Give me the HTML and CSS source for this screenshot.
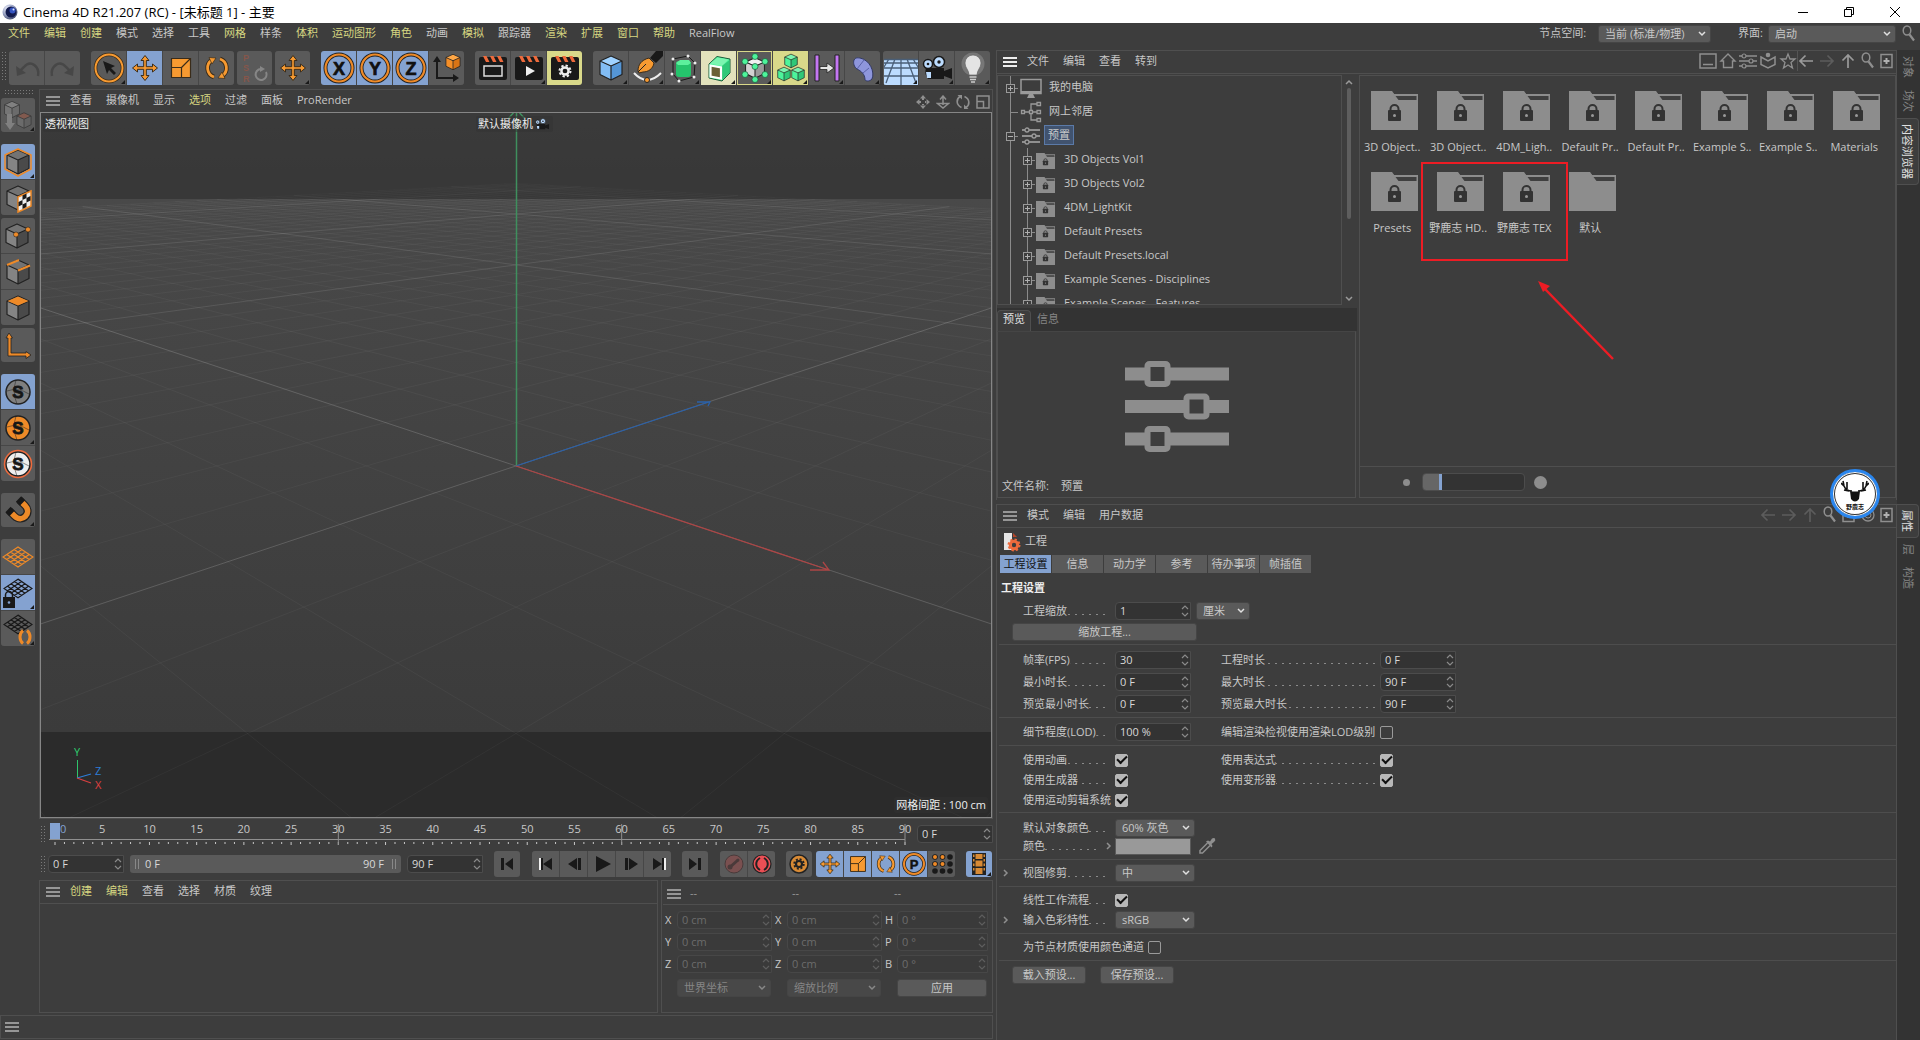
FILE: index.html
```html
<!DOCTYPE html>
<html lang="zh-CN">
<head>
<meta charset="utf-8">
<title>Cinema 4D R21.207 (RC) - [未标题 1] - 主要</title>
<link rel="stylesheet" href="styles.css">
</head>
<body>
<svg class="defs" aria-hidden="true">
  <symbol id="cube" viewBox="0 0 28 28"><path class="ct" d="M14 2 25 7 14 12 3 7Z"/><path class="cl" d="M3 7 14 12V26L3 20.500Z"/><path class="cr" d="M25 7 14 12V26L25 20.500Z"/><path fill="none" stroke="#222" stroke-width="1.200" stroke-linejoin="round" d="M14 2 25 7V20.500L14 26 3 20.500V7ZM3 7l11 5 11-5M14 12v14"/></symbol>
  <symbol id="move" viewBox="0 0 28 28"><path fill="#f79a31" stroke="#3a2c1a" stroke-width="1" stroke-linejoin="round" d="M14 1.500 18 6.500H15.300V12.700H21.500V10L26.500 14 21.500 18V15.300H15.300V21.500H18L14 26.500 10 21.500H12.700V15.300H6.500V18L1.500 14 6.500 10V12.700H12.700V6.500H10Z"/></symbol>
  <symbol id="scale" viewBox="0 0 28 28"><path fill="#f79a31" stroke="#3a2c1a" stroke-width="1.200" d="M4.500 4.500h19v19h-19z"/><path fill="none" stroke="#3a2c1a" stroke-width="1.200" d="M4.500 13.500h10v10M14.500 13.500l9-9"/></symbol>
  <symbol id="rotate" viewBox="0 0 28 28"><g fill="none" stroke="#3a2c1a" stroke-width="4.600"><path d="M11 23A9.500 9.500 0 0 1 9 6M17 5A9.500 9.500 0 0 1 19 22"/></g><g fill="none" stroke="#f79a31" stroke-width="2.800"><path d="M11 23A9.500 9.500 0 0 1 9 6M17 5A9.500 9.500 0 0 1 19 22"/></g><path fill="#f79a31" stroke="#3a2c1a" stroke-width=".7" d="M6 3.500l7 .5-4 6zM22 24.500l-7-.5 4-6z"/></symbol>
  <symbol id="clap" viewBox="0 0 34 34"><path fill="#191919" d="M3 12h28v15q0 2-2 2H5q-2 0-2-2z"/><path fill="#191919" d="M3 8q0-2 2-2h24q2 0 2 2v5H3z"/><path fill="#ee6a3c" d="M7 5h3.500l3 6H10zM14 5h3.500l3 6H17zM21 5h3.500l3 6H24z"/></symbol>
  <symbol id="folder" viewBox="0 0 47 39"><path fill="#8d8d8d" d="M0 0H21L27 9H47V39H0Z"/><path fill="#8d8d8d" d="M21 0 23 3H47V9H25Z"/><path fill="#3f3f3f" d="M24.500 5H45.500V9H27.500Z"/></symbol>
  <symbol id="lockfolder" viewBox="0 0 47 39"><use href="#folder" width="47" height="39"/><path fill="none" stroke="#333" stroke-width="2" d="M19.500 20v-2a4 4 0 0 1 8 0v2"/><rect x="17" y="19" width="13" height="11" rx="1" fill="#333"/><circle cx="23.500" cy="24.500" r="1.500" fill="#999"/></symbol>
  <symbol id="burger" viewBox="0 0 14 10"><path stroke="currentColor" stroke-width="2" d="M0 1h14M0 5h14M0 9h14"/></symbol>
  <symbol id="chev" viewBox="0 0 8 6"><path fill="none" stroke="currentColor" stroke-width="1.500" d="M1 1l3 3 3-3"/></symbol>
  <symbol id="more" viewBox="0 0 6 8"><path fill="none" stroke="#8f8f8f" stroke-width="1.500" d="M1 1l3 3-3 3"/></symbol>
  <symbol id="spin" viewBox="0 0 8 14"><path fill="none" stroke="currentColor" stroke-width="1.200" d="M1 5l3-3 3 3M1 9l3 3 3-3"/></symbol>
  <symbol id="plus" viewBox="0 0 18 24"><path stroke="#8a8a8a" d="M8.500 0V8M8.500 17V24M13 12.500h3"/><rect x="4.500" y="8.500" width="8" height="8" fill="none" stroke="#9a9a9a"/><path stroke="#b0b0b0" d="M6 12.500h5M8.500 10v5"/></symbol>
  <symbol id="minus" viewBox="0 0 18 24"><path stroke="#8a8a8a" d="M8.500 0V8M8.500 17V24M13 12.500h3"/><rect x="4.500" y="8.500" width="8" height="8" fill="none" stroke="#9a9a9a"/><path stroke="#b0b0b0" d="M6 12.500h5"/></symbol>
  <symbol id="search" viewBox="0 0 14 18"><ellipse cx="5" cy="5.500" rx="3.800" ry="4.500" fill="none" stroke="#8f8f8f" stroke-width="1.500"/><path stroke="#8f8f8f" stroke-width="2.200" d="M7.500 9.500l4.500 6"/></symbol>
  <symbol id="addbox" viewBox="0 0 14 16"><rect x="1" y="1.500" width="11" height="13" fill="none" stroke="#8f8f8f" stroke-width="1.500"/><path stroke="#b0b0b0" stroke-width="2" d="M3.500 8h6M6.500 5v6"/></symbol>
  <symbol id="arr" viewBox="0 0 16 14"><path fill="none" stroke="currentColor" stroke-width="1.700" d="M15 7H2M7.500 1.500 2 7l5.500 5.500"/></symbol>
  <symbol id="snap" viewBox="0 0 28 28"><circle class="sc" cx="14" cy="14" r="12" stroke-width="1.500"/><path fill="none" stroke="#222" stroke-opacity=".5" d="M3 13q11-4 22 3M12 2q-4 12 1 24"/></symbol>
  <symbol id="mesh" viewBox="0 0 32 22"><path fill="none" stroke="currentColor" stroke-width="1.300" d="M16 1 31 11 16 21 1 11ZM12.200 3.500 27.200 13.500M8.500 6 23.500 16M4.800 8.500 19.800 18.500M19.800 3.500 4.800 13.500M23.500 6 8.500 16M27.200 8.500 12.200 18.500"/></symbol>
  <symbol id="cam" viewBox="0 0 34 34"><path fill="#191919" d="M6 17h18v11H8q-4-5-2-11zM24 20l8-3v11l-8-3z"/><circle cx="8" cy="13" r="4.500" fill="#bcdcff" stroke="#191919" stroke-width="1.500"/><circle cx="19" cy="11" r="5.500" fill="#bcdcff" stroke="#191919" stroke-width="1.500"/><circle cx="8" cy="13" r="1.300" fill="#191919"/><circle cx="19" cy="11" r="1.700" fill="#191919"/><path fill="#bcdcff" d="M6 21h5v6H7z"/></symbol>
</svg>

<header class="titlebar">
  <svg width="16" height="16" viewBox="0 0 16 16"><defs><radialGradient id="lg" cx=".35" cy=".3" r=".8"><stop offset="0" stop-color="#f4f6ff"/><stop offset=".5" stop-color="#9aa3c4"/><stop offset="1" stop-color="#3b4466"/></radialGradient></defs><circle cx="8" cy="8" r="7.500" fill="url(#lg)"/><circle cx="9" cy="8" r="5.500" fill="#131b4e"/><circle cx="10.500" cy="6.500" r="3" fill="#3554c0"/><circle cx="11.500" cy="5.500" r="1" fill="#dce6ff"/></svg>
  <h1>Cinema 4D R21.207 (RC) - [未标题 1] - 主要</h1>
  <div class="winbtns">
    <button aria-label="最小化"><svg width="12" height="12"><path stroke="#000" d="M1 6.500h10"/></svg></button>
    <button aria-label="还原"><svg width="12" height="12"><path fill="none" stroke="#000" d="M1.500 3.500h7v7h-7zM3.500 3V1.500h7v7H9"/></svg></button>
    <button aria-label="关闭"><svg width="12" height="12"><path fill="none" stroke="#000" d="M1 1l10 10M11 1 1 11"/></svg></button>
  </div>
</header>

<div class="menubar">
  <nav class="menu">
    <button class="y">文件</button><button class="y">编辑</button><button class="y">创建</button><button>模式</button><button>选择</button><button>工具</button><button class="y">网格</button><button>样条</button><button class="y">体积</button><button class="y">运动图形</button><button class="y">角色</button><button>动画</button><button class="y">模拟</button><button>跟踪器</button><button class="y">渲染</button><button class="y">扩展</button><button class="y">窗口</button><button class="y">帮助</button><button>RealFlow</button>
  </nav>
  <label for="nodes">节点空间:</label>
  <span class="sel w-nodes"><select id="nodes"><option>当前 (标准/物理)</option></select><svg width="8" height="6"><use href="#chev"/></svg></span>
  <label for="layout" class="lay">界面:</label>
  <span class="sel w-layout"><select id="layout"><option>启动</option></select><svg width="8" height="6"><use href="#chev"/></svg></span>
  <button class="find" aria-label="搜索"><svg width="14" height="18"><use href="#search"/></svg></button>
</div>

<main class="app">
<section class="left">
  <div class="toolbar">
    <i class="grip v"></i>
    <div class="grp"><button disabled><svg viewBox="0 0 34 34"><path fill="none" stroke="#474747" stroke-width="2.500" d="M28 25c2-9-7-17-14-9l-4 4"/><path fill="#474747" d="M6 15l1 10 9-3z"/></svg></button><button disabled><svg viewBox="0 0 34 34"><path fill="none" stroke="#474747" stroke-width="2.500" d="M6 25c-2-9 7-17 14-9l4 4"/><path fill="#474747" d="M28 15l-1 10-9-3z"/></svg></button></div>
    <div class="grp g2"><button class="tri"><svg viewBox="0 0 34 34"><circle cx="17" cy="17" r="13.500" fill="none" stroke="#3a2c1a" stroke-width="3.500"/><circle cx="17" cy="17" r="13.500" fill="none" stroke="#f79a31" stroke-width="2"/><path fill="#191919" d="M11 10l12 5-4 2 5 5-2 2-5-5-2 4z"/></svg></button><button class="on"><svg viewBox="0 0 34 34"><use href="#move" x="3" y="3" width="28" height="28"/></svg></button><button><svg viewBox="0 0 34 34"><use href="#scale" x="3" y="3" width="28" height="28"/></svg></button><button><svg viewBox="0 0 34 34"><use href="#rotate" x="3" y="3" width="28" height="28"/></svg></button></div>
    <div class="grp g3"><button disabled><svg viewBox="0 0 34 34"><g class="psr"><text x="5" y="10">P</text><text x="5" y="20">S</text><text x="5" y="31">R</text></g><path fill="none" stroke="#868686" stroke-width="2" d="M28 21a5.500 5.500 0 1 1-5-3"/><path fill="#868686" d="M22 15l5 3-5 3z"/></svg></button></div>
    <div class="grp g4"><button class="tri"><svg viewBox="0 0 34 34"><use href="#move" x="3" y="3" width="28" height="28"/></svg></button></div>
    <div class="grp g2"><button class="on"><svg viewBox="0 0 34 34"><g fill="none"><circle cx="17" cy="17" r="13.500" stroke="#222" stroke-width="4"/><circle cx="17" cy="17" r="13.500" stroke="#ee8a28" stroke-width="2.200"/></g><text x="17" y="23.500" text-anchor="middle" class="big">X</text></svg></button><button class="on"><svg viewBox="0 0 34 34"><g fill="none"><circle cx="17" cy="17" r="13.500" stroke="#222" stroke-width="4"/><circle cx="17" cy="17" r="13.500" stroke="#ee8a28" stroke-width="2.200"/></g><text x="17" y="23.500" text-anchor="middle" class="big">Y</text></svg></button><button class="on"><svg viewBox="0 0 34 34"><g fill="none"><circle cx="17" cy="17" r="13.500" stroke="#222" stroke-width="4"/><circle cx="17" cy="17" r="13.500" stroke="#ee8a28" stroke-width="2.200"/></g><text x="17" y="23.500" text-anchor="middle" class="big">Z</text></svg></button><button><svg viewBox="0 0 34 34"><path fill="none" stroke="#191919" stroke-width="2" d="M7 10v17h17"/><path fill="#191919" d="M7 5l4 6H3zM29 27l-6 4v-8z"/><g class="orange"><use href="#cube" x="14" y="2" width="18" height="18"/></g></svg></button></div>
    <div class="grp g2"><button><svg viewBox="0 0 34 34"><use href="#clap"/><path fill="none" stroke="#ddd" stroke-width="1.500" d="M8 15h18v10H8z"/></svg></button><button class="tri"><svg viewBox="0 0 34 34"><use href="#clap"/><path fill="#eee" d="M14 15l9 5-9 5z"/></svg></button><button class="yel"><svg viewBox="0 0 34 34"><use href="#clap"/><circle cx="17" cy="20" r="3.600" fill="none" stroke="#eee" stroke-width="2.500"/><circle cx="17" cy="20" r="5.500" fill="none" stroke="#eee" stroke-width="2" stroke-dasharray="2.300 2"/></svg></button></div>
    <div class="grp g2"><button class="tri blue"><svg viewBox="0 0 34 34"><use href="#cube" x="3" y="3" width="28" height="28"/></svg></button><button class="tri"><svg viewBox="0 0 34 34"><path fill="#191919" d="M20 7l6-7h7v5l-7 7z"/><path fill="#f79a31" stroke="#3a2c1a" d="M8 20c0-6 3-11 11-13l5 5c-1 6-6 9-11 9l-4 1z"/><path stroke="#222" d="M8 21l8-8"/><path fill="none" stroke="#eee" stroke-width="2" d="M4 22q13 14 27 0"/><circle cx="17" cy="29" r="2.500" fill="#f79a31" stroke="#222"/></svg></button><button class="tri grn"><svg viewBox="0 0 34 34"><path fill="none" stroke="#191919" d="M7 8l15-3 7 7-1 14-15 4-6-7z"/><rect x="10" y="10" width="15" height="16" rx="3" fill="#25c46c"/><path fill="#5cf09c" d="M10 12l4-3h9l2 3-3 2H12z"/><g fill="#eee"><circle cx="7" cy="8" r="1.500"/><circle cx="22" cy="5" r="1.500"/><circle cx="29" cy="12" r="1.500"/><circle cx="28" cy="26" r="1.500"/><circle cx="13" cy="30" r="1.500"/><circle cx="6" cy="23" r="1.500"/></g></svg></button><button class="tri pale grn"><svg viewBox="0 0 34 34"><path fill="#4df49b" stroke="#1c5a3a" d="M7 13 15 5.500 28 8V22L20 30 7 27Z"/><path fill="#7bf5b0" d="M8 12.500 15.500 6.500 26.500 8.500 20 15Z"/><path fill="#2fc878" d="M20 15 27.500 9V22L20 29Z"/><path fill="#6b6038" stroke="#fff" stroke-width="2.200" d="M8.500 14.500 19 16.500V27.500L8.500 25.500Z"/></svg></button><button class="tri ring"><svg viewBox="0 0 34 34"><g class="wht"><use href="#cube" x="5" y="5" width="24" height="24"/></g><g fill="#4df49b" stroke="#1c5a3a" stroke-width=".7"><circle cx="17" cy="5.500" r="3"/><circle cx="7" cy="10.500" r="3"/><circle cx="27" cy="10.500" r="3"/><circle cx="17" cy="15.500" r="3"/><circle cx="7" cy="23.500" r="3"/><circle cx="27" cy="23.500" r="3"/><circle cx="17" cy="28.500" r="3"/></g></svg></button><button class="tri yel grn"><svg viewBox="0 0 34 34"><use href="#cube" x="9" y="2" width="16" height="16"/><use href="#cube" x="2" y="15" width="16" height="16"/><use href="#cube" x="16" y="15" width="16" height="16"/></svg></button><button class="tri"><svg viewBox="0 0 34 34"><path fill="#c477f3" stroke="#222" d="M5 4h4v26H5zM25 4h4v26h-4z"/><path fill="#e6e6e6" stroke="#222" stroke-width=".8" d="M10 15.500h7V12l7 5-7 5v-3.500h-7z"/></svg></button><button class="tri"><svg viewBox="0 0 34 34"><path fill="#8e96dc" stroke="#333a66" d="M8 9c2-3 4-2 6-2 10 2 15 14 12 21-3 3-6 2-7 1 0-6-4-9-8-11-3-2-4-6-3-9z"/><path stroke="#5a62a8" d="M11 18l7-9M17 22l6-5"/></svg></button></div>
    <div class="grp g4"><button class="tri"><svg viewBox="0 0 34 34"><path fill="#bcdcff" d="M0 8h34v26H0z"/><path fill="none" stroke="#4a5f78" stroke-width="1.300" d="M0 8.500h34M0 12h34M0 17h34M0 25h34M17 8v26M11 8 2 32M23 8l9 24M5 8l-5 8M29 8l5 8"/></svg></button><button class="tri"><svg viewBox="0 0 34 34"><use href="#cam"/></svg></button><button class="tri"><svg viewBox="0 0 34 34"><circle cx="17" cy="13" r="11.500" fill="#fff" opacity=".18"/><path fill="#e4e4e4" stroke="#666" stroke-width=".7" d="M9 12a8 8 0 0 1 16 0c0 5-4 7-4 12h-8c0-5-4-7-4-12z"/><path stroke="#ccc" stroke-width="1.600" d="M13.500 26h7M14 28.500h6M15 31h4"/></svg></button></div>
  </div>

  <div class="work">
    <aside class="tools">
      <i class="grip h"></i>
      <div class="vgrp"><button disabled class="tri gry"><svg viewBox="0 0 34 34" opacity=".6"><use href="#cube" x="1" y="2" width="20" height="19"/><g class="red"><use href="#cube" x="14" y="13" width="18" height="19"/></g><path fill="#999" d="M6 16h5v9h3l-5 7-5-7h2z"/></svg></button></div>
      <div class="vgrp a"><button class="on tri dk"><svg viewBox="0 0 34 34"><use href="#cube" x="3" y="3" width="28" height="28"/><path fill="none" stroke="#ee8a28" stroke-width="1.500" stroke-linejoin="round" d="M17 4 30 10V24L17 31 4 24V10Z"/></svg></button><button class="dk"><svg viewBox="0 0 34 34"><use href="#cube" x="3" y="3" width="28" height="28"/><path fill="#eee" stroke="#ee8a28" stroke-width="1.500" d="M17 16l13-6v15l-13 6z"/><path fill="#191919" d="M17.500 21l4-2v-4.500l4-2v4.500l4-2v4.500l-4 2V17l-4 2v4.500l-4 2zM21.500 23.500l4-2V26l-4 2z"/></svg></button></div>
      <div class="vgrp"><button class="dk"><svg viewBox="0 0 34 34"><use href="#cube" x="2" y="3" width="28" height="28"/><circle cx="15" cy="15.500" r="2.500" fill="#ee8a28" stroke="#222" stroke-width=".6"/><circle cx="27" cy="10.500" r="2.500" fill="#ee8a28" stroke="#222" stroke-width=".6"/></svg></button><button class="dk"><svg viewBox="0 0 34 34"><use href="#cube" x="3" y="3" width="28" height="28"/><path stroke="#ee8a28" stroke-width="2" d="M6 10l12-5M17 15.500l12-5"/></svg></button><button class="dk"><svg viewBox="0 0 34 34"><use href="#cube" x="3" y="3" width="28" height="28"/><path fill="#ee8a28" d="M17 5.500 27.500 10 17 14.500 6.500 10z"/></svg></button></div>
      <div class="vgrp"><button><svg viewBox="0 0 34 34"><path fill="#ee8a28" stroke="#222" stroke-width=".8" d="M8 5l3.500 5H10v15h15v-1.500l5 3.500-5 3.500V28H7V10H5z"/></svg></button></div>
      <div class="vgrp a"><button class="on sg"><svg viewBox="0 0 34 34"><use href="#snap" x="3" y="3" width="28" height="28"/><text x="17" y="23" text-anchor="middle" class="blk">S</text></svg></button><button class="tri so"><svg viewBox="0 0 34 34"><use href="#snap" x="3" y="3" width="28" height="28"/><text x="17" y="23" text-anchor="middle" class="blk">S</text></svg></button><button class="sw"><svg viewBox="0 0 34 34"><use href="#snap" x="3" y="3" width="28" height="28"/><circle cx="17" cy="17" r="13.500" fill="none" stroke="#ee6a3c" stroke-width="1.500"/><text x="17" y="23" text-anchor="middle" class="blk">S</text></svg></button></div>
      <div class="vgrp a"><button class="tri"><svg viewBox="0 0 34 34"><g fill="none" stroke="#222" stroke-width="8"><path d="M8 17.500 13.500 23C21 30.500 31.500 20 24 12.500L18.500 7"/></g><path fill="none" stroke="#ee8a28" stroke-width="5.600" d="M10 19.500 13.500 23C21 30.500 31.500 20 24 12.500L20.500 9"/><path stroke="#191919" stroke-width="7.500" d="M7 16.500l4 4M17.500 6l4 4"/></svg></button></div>
      <div class="vgrp a"><button><svg viewBox="0 0 34 34" class="ora"><use href="#mesh" x="1" y="6" width="32" height="22"/></svg></button><button class="on tri"><svg viewBox="0 0 34 34" class="blkc"><use href="#mesh" x="2" y="2" width="30" height="21"/><rect x="2" y="21" width="12" height="11" fill="#191919"/><path fill="none" stroke="#191919" stroke-width="1.500" d="M4.500 21v-2a3.500 3.500 0 0 1 7 0v2"/><circle cx="8" cy="26.500" r="1.300" fill="#84a2d0"/></svg></button><button class="tri"><svg viewBox="0 0 34 34" class="blkc"><use href="#mesh" x="2" y="2" width="30" height="21"/><path fill="none" stroke="#ee8a28" stroke-width="3" d="M22 18.500c-4 3-4 10 0 13M26 18.500c4 3 4 10 0 13"/></svg></button></div>
    </aside>

    <div class="center">
      <div class="panel viewpanel">
        <nav class="menu phead"><svg class="bg" width="14" height="10"><use href="#burger"/></svg><button>查看</button><button>摄像机</button><button>显示</button><button class="y">选项</button><button>过滤</button><button>面板</button><button>ProRender</button>
          <span class="vicons"><svg width="14" height="14" viewBox="0 0 14 14"><path fill="#8f8f8f" d="M7 0l3 3.500H4zM7 14l3-3.500H4zM0 7l3.500-3v6zM14 7l-3.500-3v6zM6 3h2v2H6zM6 9h2v2H6zM3 6h2v2H3zM9 6h2v2H9z"/></svg><svg width="14" height="14" viewBox="0 0 14 14"><path fill="none" stroke="#8f8f8f" stroke-width="1.500" d="M7 10V2M4 4.500 7 1l3 3.500M1.500 8.500h11L7 13z"/></svg><svg width="14" height="14" viewBox="0 0 14 14"><path fill="none" stroke="#8f8f8f" stroke-width="1.600" d="M5.500 12.500C0 10 0 4 4 1.500M8.500 1.500C14 4 14 10 10 12.500"/><path fill="#8f8f8f" d="M1.500 0H6v4.500zM12.500 14H8V9.500z"/></svg><svg width="14" height="14" viewBox="0 0 14 14"><path fill="none" stroke="#8f8f8f" stroke-width="1.500" d="M1 1h12v12H1zM1 6.500h6.500V13"/></svg></span>
        </nav>
        <div class="viewport">
          <svg class="scene" viewBox="0 0 950 704" preserveAspectRatio="xMidYMid slice">
            <defs><linearGradient id="sky" x2="0" y2="1"><stop offset="0" stop-color="#3d3d3d"/><stop offset="1" stop-color="#373737"/></linearGradient><linearGradient id="floor" x2="0" y2="1"><stop offset="0" stop-color="#494949"/><stop offset="1" stop-color="#3b3b3b"/></linearGradient></defs>
            <rect width="950" height="87" fill="url(#sky)"/><rect y="86" width="950" height="533" fill="url(#floor)"/><rect y="619" width="950" height="85" fill="#2b2b2b"/>
            <path id="minor" fill="none" stroke="#fff" stroke-opacity=".04"/><path id="major" fill="none" stroke="#fff" stroke-opacity=".1"/><path id="axes" fill="none" stroke="#fff" stroke-opacity=".07"/>
            <rect width="950" height="86" fill="#393939" opacity=".6"/>
            <path fill="none" stroke="#3f8f5e" stroke-width="1.500" d="M475.500 353V0M467 6l7-8M484 6l-7-8"/>
            <path fill="none" stroke="#2a61aa" stroke-width="1.300" d="M475 353 668 289M656 289h13l-2 4"/>
            <path fill="none" stroke="#ad4545" stroke-width="1.300" d="M475 353 788 457M782 449l6 8h-19"/>
          </svg>
          <span class="tag tl">透视视图</span>
          <span class="tag tc">默认摄像机<svg width="18" height="16"><use href="#cam"/></svg></span>
          <svg class="gizmo" width="44" height="50" viewBox="0 0 44 50"><path stroke="#2fc46b" d="M12.500 15v18"/><path stroke="#2d7dd6" stroke-width="1.300" d="M12 33l14-4"/><path stroke="#d84040" stroke-width="1.300" d="M12 33l14 5"/><text x="9" y="11" fill="#2fd070">Y</text><text x="30" y="30" fill="#2d7dd6">Z</text><text x="30" y="44" fill="#e04040">X</text></svg>
          <span class="tag br">网格间距 : 100 cm</span>
        </div>
      </div>

      <div class="timeline">
        <i class="grip v"></i>
        <div class="ruler">
          <i class="head"></i>
          <ol id="labels"></ol>
          <svg id="ticks" width="100%" height="24"></svg>
        </div>
        <span class="num"><input aria-label="当前帧" value="0 F"><svg width="8" height="14"><use href="#spin"/></svg></span>
      </div>

      <div class="transport">
        <i class="grip v"></i>
        <span class="num"><input aria-label="起始帧" value="0 F"><svg width="8" height="14"><use href="#spin"/></svg></span>
        <div class="range"><i></i><span>0 F</span><span class="end">90 F</span><i></i></div>
        <span class="num"><input aria-label="结束帧" value="90 F"><svg width="8" height="14"><use href="#spin"/></svg></span>
        <div class="pg one p1"><button><svg viewBox="0 0 26 26"><path fill="#191919" d="M7 7h3v12H7zM19 7v12l-8-6z"/></svg></button></div>
        <div class="pg p1"><button><svg viewBox="0 0 26 26"><path fill="#eee" d="M6 7h2v12H6z"/><path fill="#191919" d="M8 7h2v12H8zM19 7v12l-9-6z"/></svg></button><button><svg viewBox="0 0 26 26"><path fill="#191919" d="M7 13l9-6v12zM17 7h3v12h-3z"/></svg></button><button><svg viewBox="0 0 26 26"><path fill="#191919" d="M7 5l15 8-15 8z"/></svg></button><button><svg viewBox="0 0 26 26"><path fill="#191919" d="M8 7h3v12H8zM12 7l9 6-9 6z"/></svg></button><button><svg viewBox="0 0 26 26"><path fill="#191919" d="M8 7l9 6-9 6zM17 7h2v12h-2z"/><path fill="#eee" d="M19 7h2v12h-2z"/></svg></button></div>
        <div class="pg one p1"><button><svg viewBox="0 0 26 26"><path fill="#191919" d="M7 7l8 6-8 6zM16 7h3v12h-3z"/></svg></button></div>
        <div class="pg p1"><button disabled><svg viewBox="0 0 26 26"><circle cx="13" cy="13" r="9" fill="#7a5050" stroke="#4a3a3a"/><path stroke="#4a3a3a" stroke-width="3" d="M8 17l9-8"/><circle cx="9" cy="16" r="2.500" fill="#4a3a3a"/><circle cx="17" cy="9" r="1.500" fill="#4a3a3a"/></svg></button><button><svg viewBox="0 0 26 26"><circle cx="13" cy="13" r="9" fill="#ea4f55" stroke="#222" stroke-width="1.200"/><path fill="none" stroke="#222" stroke-width="2" d="M11 7c-5 3-5 9 0 12M15 7c5 3 5 9 0 12"/></svg></button></div>
        <div class="pg one p1"><button><svg viewBox="0 0 26 26"><circle cx="13" cy="13" r="9" fill="#d88a35" stroke="#222" stroke-width="1.500"/><circle cx="13" cy="13" r="3" fill="none" stroke="#222" stroke-width="2.200"/><circle cx="13" cy="13" r="4.800" fill="none" stroke="#222" stroke-width="1.800" stroke-dasharray="2 1.770"/></svg></button></div>
        <div class="pg p4"><button class="on"><svg viewBox="0 0 26 26"><use href="#move" x="2" y="2" width="22" height="22"/></svg></button><button class="on"><svg viewBox="0 0 26 26"><use href="#scale" x="2" y="2" width="22" height="22"/></svg></button><button class="on"><svg viewBox="0 0 26 26"><use href="#rotate" x="2" y="2" width="22" height="22"/></svg></button><button class="on"><svg viewBox="0 0 26 26"><circle cx="13" cy="13" r="10" fill="none" stroke="#222" stroke-width="3.500"/><circle cx="13" cy="13" r="10" fill="none" stroke="#ee8a28" stroke-width="2"/><text x="13" y="18" text-anchor="middle" class="med">P</text></svg></button><button><svg viewBox="0 0 26 26"><g fill="#191919"><circle cx="6" cy="6" r="2.800"/><circle cx="13.500" cy="6" r="2.800"/><circle cx="21" cy="6" r="2.800"/><circle cx="6" cy="13" r="2.800"/><circle cx="13.500" cy="13" r="2.800"/><circle cx="21" cy="13" r="2.800"/><circle cx="6" cy="20" r="2.800"/><circle cx="13.500" cy="20" r="2.800"/><circle cx="21" cy="20" r="2.800"/></g><g fill="#ee8a28"><circle cx="6" cy="6" r="2"/><circle cx="13.500" cy="6" r="2"/><circle cx="6" cy="13" r="2"/><circle cx="13.500" cy="13" r="2"/></g></svg></button></div>
        <div class="pg one p1"><button class="on tri"><svg viewBox="0 0 26 26"><path fill="#222" d="M6 2h14v22H6z"/><path fill="#d88a35" d="M9.500 3h7v5h-7zM9.500 9.500h7v6h-7zM9.500 17h7v6h-7zM7 3.500h1.500V6H7zM7 8h1.500v2.500H7zM7 12.500h1.500V15H7zM7 17h1.500v2.500H7zM17.500 3.500H19V6h-1.500zM17.500 8H19v2.500h-1.500zM17.500 12.500H19V15h-1.500zM17.500 17H19v2.500h-1.500z"/></svg></button></div>
      </div>

      <div class="bottom">
        <div class="panel mats"><nav class="menu phead"><svg class="bg" width="14" height="10"><use href="#burger"/></svg><button class="y">创建</button><button class="y">编辑</button><button>查看</button><button>选择</button><button>材质</button><button>纹理</button></nav></div>
        <div class="panel coords">
          <div class="chead"><svg class="bg" width="14" height="10"><use href="#burger"/></svg><span>--</span><span>--</span><span>--</span></div>
          <div class="cgrid">
            <label for="px">X</label><span class="num"><input id="px" disabled value="0 cm"><svg width="8" height="14"><use href="#spin"/></svg></span><label for="sx">X</label><span class="num"><input id="sx" disabled value="0 cm"><svg width="8" height="14"><use href="#spin"/></svg></span><label for="rh">H</label><span class="num"><input id="rh" disabled value="0 °"><svg width="8" height="14"><use href="#spin"/></svg></span>
            <label for="py">Y</label><span class="num"><input id="py" disabled value="0 cm"><svg width="8" height="14"><use href="#spin"/></svg></span><label for="sy">Y</label><span class="num"><input id="sy" disabled value="0 cm"><svg width="8" height="14"><use href="#spin"/></svg></span><label for="rp">P</label><span class="num"><input id="rp" disabled value="0 °"><svg width="8" height="14"><use href="#spin"/></svg></span>
            <label for="pz">Z</label><span class="num"><input id="pz" disabled value="0 cm"><svg width="8" height="14"><use href="#spin"/></svg></span><label for="sz">Z</label><span class="num"><input id="sz" disabled value="0 cm"><svg width="8" height="14"><use href="#spin"/></svg></span><label for="rb">B</label><span class="num"><input id="rb" disabled value="0 °"><svg width="8" height="14"><use href="#spin"/></svg></span>
            <span></span><span class="sel off"><select disabled aria-label="坐标系"><option>世界坐标</option></select><svg width="8" height="6"><use href="#chev"/></svg></span><span></span><span class="sel off"><select disabled aria-label="尺寸模式"><option>缩放比例</option></select><svg width="8" height="6"><use href="#chev"/></svg></span><span></span><button class="btn">应用</button>
          </div>
        </div>
      </div>
    </div>
  </div>
  <footer class="panel status"><svg class="bg" width="14" height="10"><use href="#burger"/></svg></footer>
</section>

<section class="right">
  <div class="browser panel">
    <nav class="menu phead"><svg class="bg lit" width="14" height="10"><use href="#burger"/></svg><button>文件</button><button>编辑</button><button>查看</button><button>转到</button>
      <span class="bicons">
        <svg width="18" height="18" viewBox="0 0 18 18"><path fill="none" stroke="#8f8f8f" stroke-width="1.500" d="M1 2h16v14H1zM4 12.500h10"/></svg>
        <svg width="18" height="18" viewBox="0 0 18 18"><path fill="none" stroke="#8f8f8f" stroke-width="1.400" d="M9 2l7 7h-2.500v6.500h-9V9H2z"/></svg>
        <svg width="18" height="18" viewBox="0 0 18 18"><path stroke="#8f8f8f" stroke-width="1.500" d="M0 4h18M0 9h18M0 14h18"/><g fill="#3d3d3d" stroke="#8f8f8f" stroke-width="1.200"><circle cx="5" cy="4" r="2"/><circle cx="12" cy="9" r="2"/><circle cx="5" cy="14" r="2"/></g></svg>
        <svg width="18" height="18" viewBox="0 0 18 18"><circle cx="9" cy="3" r="2.300" fill="#8f8f8f"/><path fill="none" stroke="#8f8f8f" stroke-width="1.500" d="M2 5l7 4 7-4v7.500L9 16l-7-3.500z"/></svg>
        <svg width="18" height="18" viewBox="0 0 18 18"><path fill="none" stroke="#8f8f8f" stroke-width="1.300" d="M9 2l2 5h5l-4 3.500 1.500 5.500L9 13l-4.500 3L6 10.500 2 7h5z"/></svg>
        <i class="vr"></i>
        <svg width="16" height="14"><use href="#arr"/></svg><svg class="dim flip" width="16" height="14"><use href="#arr"/></svg><svg class="up" width="16" height="14"><use href="#arr"/></svg>
        <svg width="14" height="18"><use href="#search"/></svg><svg width="14" height="16"><use href="#addbox"/></svg>
      </span>
    </nav>
    <div class="bbody">
      <div class="bleft">
        <div class="treewrap">
          <ul class="tree">
            <li><svg width="18" height="24"><use href="#plus"/></svg><svg class="ic" width="22" height="20" viewBox="0 0 22 20"><path fill="none" stroke="#9a9a9a" stroke-width="1.500" d="M1 1.500h20v14H1z"/><path fill="#9a9a9a" d="M1 13h20v3H1zM9 16h4l2 4H7z"/></svg><span>我的电脑</span></li>
            <li><svg width="18" height="24" viewBox="0 0 18 24"><path stroke="#8a8a8a" d="M8.500 0v24M9 12.500h7"/></svg><svg class="ic" width="22" height="22" viewBox="0 0 22 22"><path fill="none" stroke="#9a9a9a" stroke-width="1.300" d="M5 11h4M13 11h4M11 9V3h6M11 13v6h6M1.500 9.500h3v3h-3zM9.500 9.500h3v3h-3zM17 9.500h3.500v3H17zM17 1.500h3.500v3H17zM17 17.500h3.500v3H17z"/></svg><span>网上邻居</span></li>
            <li><svg width="18" height="24"><use href="#minus"/></svg><svg class="ic" width="22" height="20" viewBox="0 0 22 20"><path stroke="#8f8f8f" stroke-width="1.800" d="M2 4h18M2 10h18M2 16h18"/><g fill="#3d3d3d" stroke="#9a9a9a" stroke-width="1.300"><circle cx="7" cy="4" r="2"/><circle cx="14" cy="10" r="2"/><circle cx="7" cy="16" r="2"/></g></svg><span class="cur">预置</span></li>
            <li class="s"><svg width="18" height="24"><use href="#plus"/></svg><svg class="ic" width="19" height="16"><use href="#lockfolder"/></svg><span>3D Objects Vol1</span></li>
            <li class="s"><svg width="18" height="24"><use href="#plus"/></svg><svg class="ic" width="19" height="16"><use href="#lockfolder"/></svg><span>3D Objects Vol2</span></li>
            <li class="s"><svg width="18" height="24"><use href="#plus"/></svg><svg class="ic" width="19" height="16"><use href="#lockfolder"/></svg><span>4DM_LightKit</span></li>
            <li class="s"><svg width="18" height="24"><use href="#plus"/></svg><svg class="ic" width="19" height="16"><use href="#lockfolder"/></svg><span>Default Presets</span></li>
            <li class="s"><svg width="18" height="24"><use href="#plus"/></svg><svg class="ic" width="19" height="16"><use href="#lockfolder"/></svg><span>Default Presets.local</span></li>
            <li class="s"><svg width="18" height="24"><use href="#plus"/></svg><svg class="ic" width="19" height="16"><use href="#lockfolder"/></svg><span>Example Scenes - Disciplines</span></li>
            <li class="s"><svg width="18" height="24"><use href="#plus"/></svg><svg class="ic" width="19" height="16"><use href="#lockfolder"/></svg><span>Example Scenes - Features</span></li>
          </ul>
          <div class="scroll"><svg class="flipy" width="8" height="6"><use href="#chev"/></svg><i></i><svg width="8" height="6"><use href="#chev"/></svg></div>
        </div>
        <div class="ptabs"><button class="act">预览</button><button>信息</button></div>
        <div class="preview">
          <svg width="104" height="92" viewBox="0 0 104 92"><path stroke="#8d8d8d" stroke-width="13" d="M0 13h104M0 45.500h104M0 78h104"/><g fill="#3d3d3d" stroke="#8d8d8d" stroke-width="6"><rect x="22.500" y="3" width="20" height="20" rx="2"/><rect x="61.500" y="35.500" width="20" height="20" rx="2"/><rect x="22.500" y="68" width="20" height="20" rx="2"/></g></svg>
          <p><span>文件名称:</span><span>预置</span></p>
        </div>
      </div>
      <div class="bright">
        <div class="files">
          <figure><svg width="47" height="39"><use href="#lockfolder"/></svg><figcaption>3D Object..</figcaption></figure>
          <figure><svg width="47" height="39"><use href="#lockfolder"/></svg><figcaption>3D Object..</figcaption></figure>
          <figure><svg width="47" height="39"><use href="#lockfolder"/></svg><figcaption>4DM_Ligh..</figcaption></figure>
          <figure><svg width="47" height="39"><use href="#lockfolder"/></svg><figcaption>Default Pr..</figcaption></figure>
          <figure><svg width="47" height="39"><use href="#lockfolder"/></svg><figcaption>Default Pr..</figcaption></figure>
          <figure><svg width="47" height="39"><use href="#lockfolder"/></svg><figcaption>Example S..</figcaption></figure>
          <figure><svg width="47" height="39"><use href="#lockfolder"/></svg><figcaption>Example S..</figcaption></figure>
          <figure><svg width="47" height="39"><use href="#lockfolder"/></svg><figcaption>Materials</figcaption></figure>
          <figure><svg width="47" height="39"><use href="#lockfolder"/></svg><figcaption>Presets</figcaption></figure>
          <figure><svg width="47" height="39"><use href="#lockfolder"/></svg><figcaption>野鹿志 HD..</figcaption></figure>
          <figure><svg width="47" height="39"><use href="#lockfolder"/></svg><figcaption>野鹿志 TEX</figcaption></figure>
          <figure><svg width="47" height="39"><use href="#folder"/></svg><figcaption>默认</figcaption></figure>
          <i class="mark"></i>
          <svg class="pointer" width="80" height="82" viewBox="0 0 80 82"><path stroke="#ed1c24" stroke-width="2.500" d="M76 79 8 9"/><path fill="#ed1c24" d="M1 1l12 5-7 6z"/></svg>
        </div>
        <div class="zoombar"><i class="dot"></i><input type="range" aria-label="图标大小" min="0" max="100" value="16"><i class="dot big-dot"></i></div>
      </div>
    </div>
  </div>

  <div class="attrs panel">
    <nav class="menu phead"><svg class="bg" width="14" height="10"><use href="#burger"/></svg><button>模式</button><button>编辑</button><button>用户数据</button>
      <span class="aicons"><svg class="dim" width="16" height="14"><use href="#arr"/></svg><svg class="dim flip" width="16" height="14"><use href="#arr"/></svg><svg class="dim up" width="16" height="14"><use href="#arr"/></svg><svg width="14" height="18"><use href="#search"/></svg><svg width="14" height="16"><use href="#addbox"/></svg><svg width="14" height="14" viewBox="0 0 14 14"><circle cx="7" cy="7" r="6" fill="none" stroke="#8f8f8f" stroke-width="1.300"/><circle cx="7" cy="7" r="3" fill="none" stroke="#8f8f8f"/></svg><svg width="14" height="16"><use href="#addbox"/></svg></span>
    </nav>
    <div class="obj"><svg width="18" height="20" viewBox="0 0 18 20"><path fill="#e6e6e6" d="M1 1h8v17H1z"/><path fill="#b5452a" d="M10 1l4 4h-4z"/><circle cx="11" cy="13" r="3.700" fill="none" stroke="#ee6a3c" stroke-width="3"/><circle cx="11" cy="13" r="5.500" fill="none" stroke="#ee6a3c" stroke-width="2" stroke-dasharray="2.300 2"/></svg><span>工程</span></div>
    <div class="atabs"><button class="act">工程设置</button><button>信息</button><button>动力学</button><button>参考</button><button>待办事项</button><button>帧插值</button></div>
    <h2>工程设置</h2>
    <div class="sec first">
      <div class="r"><label class="a" for="f1">工程缩放<i></i></label><span class="num"><input id="f1" value="1"><svg width="8" height="14"><use href="#spin"/></svg></span><span class="sel unit"><select aria-label="单位"><option>厘米</option></select><svg width="8" height="6"><use href="#chev"/></svg></span></div>
      <button class="btn wide">缩放工程...</button>
    </div>
    <div class="sec">
      <div class="r"><label class="a" for="f2">帧率(FPS)<i></i></label><span class="num"><input id="f2" value="30"><svg width="8" height="14"><use href="#spin"/></svg></span><label class="b" for="f3">工程时长<i></i></label><span class="num"><input id="f3" value="0 F"><svg width="8" height="14"><use href="#spin"/></svg></span></div>
      <div class="r"><label class="a" for="f4">最小时长<i></i></label><span class="num"><input id="f4" value="0 F"><svg width="8" height="14"><use href="#spin"/></svg></span><label class="b" for="f5">最大时长<i></i></label><span class="num"><input id="f5" value="90 F"><svg width="8" height="14"><use href="#spin"/></svg></span></div>
      <div class="r"><label class="a" for="f6">预览最小时长<i></i></label><span class="num"><input id="f6" value="0 F"><svg width="8" height="14"><use href="#spin"/></svg></span><label class="b" for="f7">预览最大时长<i></i></label><span class="num"><input id="f7" value="90 F"><svg width="8" height="14"><use href="#spin"/></svg></span></div>
    </div>
    <div class="sec lod">
      <div class="r"><label class="a" for="f8">细节程度(LOD)<i></i></label><span class="num"><input id="f8" value="100 %"><svg width="8" height="14"><use href="#spin"/></svg></span><label class="b" for="f9">编辑渲染检视使用渲染LOD级别</label><input type="checkbox" id="f9"></div>
    </div>
    <div class="sec checks">
      <div class="r"><label class="a" for="c1">使用动画<i></i></label><input type="checkbox" id="c1" checked><label class="b" for="c2">使用表达式<i></i></label><input type="checkbox" id="c2" checked></div>
      <div class="r"><label class="a" for="c3">使用生成器<i></i></label><input type="checkbox" id="c3" checked><label class="b" for="c4">使用变形器<i></i></label><input type="checkbox" id="c4" checked></div>
      <div class="r"><label class="a" for="c5">使用运动剪辑系统</label><input type="checkbox" id="c5" checked></div>
    </div>
    <div class="sec colors">
      <div class="r"><label class="a" for="s1">默认对象颜色<i></i></label><span class="sel mid"><select id="s1"><option>60% 灰色</option></select><svg width="8" height="6"><use href="#chev"/></svg></span></div>
      <div class="r"><label class="a" for="s2">颜色<i></i><svg width="6" height="8"><use href="#more"/></svg></label><button class="swatch" id="s2" aria-label="颜色"></button><svg class="dropper" width="18" height="18" viewBox="0 0 18 18"><path fill="none" stroke="#8f8f8f" stroke-width="1.500" d="M9.500 6 2 13.500V16h2.500L12 8.500"/><path fill="#8f8f8f" d="M8 4.500l2-1 2 1 2-3q2-1 3 0 1 2-1 3.500L13.500 7l1 2-1 1.500z"/></svg></div>
    </div>
    <div class="sec tight">
      <div class="r"><svg class="mr" width="6" height="8"><use href="#more"/></svg><label class="a" for="s3">视图修剪<i></i></label><span class="sel mid"><select id="s3"><option>中</option></select><svg width="8" height="6"><use href="#chev"/></svg></span></div>
    </div>
    <div class="sec tight">
      <div class="r"><label class="a" for="c6">线性工作流程<i></i></label><input type="checkbox" id="c6" checked></div>
      <div class="r"><svg class="mr" width="6" height="8"><use href="#more"/></svg><label class="a" for="s4">输入色彩特性<i></i></label><span class="sel mid"><select id="s4"><option>sRGB</option></select><svg width="8" height="6"><use href="#chev"/></svg></span></div>
    </div>
    <div class="sec tight"><div class="free"><label for="c7">为节点材质使用颜色通道</label><input type="checkbox" id="c7"></div></div>
    <div class="presets"><button class="btn">载入预设...</button><button class="btn">保存预设...</button></div>
  </div>
  <div class="badge"><svg width="28" height="24" viewBox="0 0 28 24"><path fill="#111" d="M9 12q5 1 10 0l-1 8q-4 5-8 0z"/><path fill="none" stroke="#111" stroke-width="1.600" d="M11 12Q5 12 3 7L2 2M6 10V3M3 7 0 4M17 12q6 0 8-5l1-5M22 10V3M25 7l3-3M8 12l-5-1M20 12l5-1"/></svg><span>野鹿志</span></div>
</section>

<aside class="side">
  <div class="stabs top"><button>对象</button><button>场次</button><button class="act">内容浏览器</button></div>
  <div class="stabs"><button class="act">属性</button><button>层</button><button>构造</button></div>
</aside>
</main>
<script src="scene.js"></script>
</body>
</html>
```
FILE: styles.css
```css
* { box-sizing: border-box; margin: 0; padding: 0; }
body { height: 100vh; display: flex; flex-direction: column; background: #3d3d3d; color: #c8c8c8; font: 11px/16px "Open Sans", "Noto Sans CJK SC", sans-serif; overflow: hidden; }
button, input, select { font: inherit; color: inherit; border: 0; background: none; border-radius: 0; outline: 0; }
button { white-space: nowrap; }
svg { display: block; flex: none; }
i { font-style: normal; display: block; }
label, span { white-space: nowrap; }
.defs { position: absolute; width: 0; height: 0; }

.titlebar { flex: none; height: 23px; background: #fff; color: #000; display: flex; align-items: center; gap: 5px; padding-left: 2px; }
.titlebar h1 { font-size: 13px; font-weight: 400; flex: 1; }
.winbtns { display: flex; gap: 2px; padding-right: 3px; }
.winbtns button { width: 44px; height: 20px; display: grid; place-items: center; }

.menubar { flex: none; height: 27px; display: flex; align-items: flex-start; padding: 2px 4px 0 8px; }
.menubar > label { margin-right: 12px; }
.menubar > .lay { margin: 0 5px 0 27px; }
.menu { display: flex; gap: 14px; }
.menubar .menu { flex: 1; }
.menu button { height: 16px; }
.y { color: #d6d681; }
.find { margin-left: 6px; width: 14px; height: 18px; }
.w-nodes { width: 113px; }
.w-layout { width: 128px; }

.sel { display: grid; height: 18px; background: #5a5a5a; border-radius: 3px; border: 1px solid #454545; }
.sel > * { grid-area: 1 / 1; }
.sel select { appearance: none; width: 100%; padding: 0 16px 0 6px; line-height: 16px; }
.sel svg { justify-self: end; align-self: center; margin-right: 4px; pointer-events: none; color: #e0e0e0; }
.sel.off { background: #484848; color: #858585; }
.sel.off select { opacity: 1; }
.sel.off svg { color: #888; }
.num { display: grid; width: 76px; height: 18px; background: #333; border: 1px solid #4c4c4c; border-radius: 4px 0 0 4px; }
.num > * { grid-area: 1 / 1; min-width: 0; }
.num input { width: 100%; padding: 0 14px 0 4px; color: #d8d8d8; }
.num svg { justify-self: end; align-self: center; margin-right: 1px; color: #8a8a8a; pointer-events: none; }
.num:has(:disabled) { background: #3a3a3a; border-color: #474747; }
.num input:disabled { color: #6c6c6c; }
.num:has(:disabled) svg { color: #5e5e5e; }
.btn { height: 18px; background: #5a5a5a; border-radius: 3px; border: 1px solid #454545; line-height: 16px; text-align: center; }
.panel { border: 1px solid #4f4f4f; }

.app { flex: 1; min-height: 0; display: grid; grid-template-columns: minmax(0, 994fr) minmax(0, 903fr) 23px; }
.left { display: flex; flex-direction: column; min-width: 0; min-height: 0; }
.toolbar { height: 39px; flex: none; display: flex; align-items: flex-start; padding: 1px 0 0 1px; }
.grip { background: radial-gradient(circle, #7a7a7a 1px, transparent 1px) 0 0 / 3px 3px; flex: none; }
.grip.v { width: 6px; height: 30px; }
.grip.h { width: 29px; height: 6px; margin: 0 0 3px 3px; }
.grp { display: flex; gap: 1px; background: #474747; border-radius: 3px; overflow: hidden; margin-left: 2px; flex: none; }
.grp.g2 { margin-left: 11px; }
.grp.g3, .grp.g4 { margin-left: 3px; }
.grp button { width: 35px; height: 34px; background: #5a5a5a; display: grid; place-items: center; }
.grp svg, .vgrp svg { width: 34px; height: 34px; }
.grp .on, .vgrp .on, .pg .on { background: #84a2d0; }
.grp .yel { background: #d9d98a; }
.grp .pale { background: #e2e2bc; }
.grp .ring { box-shadow: inset 0 0 0 1px #d9d98a; }
.tri { position: relative; }
.tri::after { content: ""; position: absolute; right: 1px; bottom: 1px; border: 2px solid #191919; border-left-color: transparent; border-top-color: transparent; }
.psr { font: bold 9px "Liberation Sans", sans-serif; fill: #86564a; }
.big { font: bold 18px "Liberation Sans", sans-serif; fill: #111; stroke: #111; stroke-width: .7px; }
.med { font: bold 13px "Liberation Sans", sans-serif; fill: #111; stroke: #111; stroke-width: .5px; }
.blk { font: bold 17px "Liberation Sans", sans-serif; fill: #161616; stroke: #161616; stroke-width: .8px; }
.ct { fill: var(--t, #777); }
.cl { fill: var(--l, #868686); }
.cr { fill: var(--r, #4a4a4a); }
.blue { --t: #9fd2ff; --l: #82bdf5; --r: #5596d6; }
.grn { --t: #7bf5b0; --l: #4df49b; --r: #2fc878; }
.wht { --t: #f0f0f0; --l: #d2d2d2; --r: #9a9a9a; }
.orange { --t: #ffa746; --l: #f58f28; --r: #d97415; }
.gry { --t: #999; --l: #888; --r: #777; }
.red { --t: #9c5a48; --l: #777; --r: #666; }
.dk { --t: #737373; --l: #848484; --r: #4a4a4a; }
.sc { fill: var(--s); stroke: #222; }
.sg { --s: #7f7f7f; }
.so { --s: #ee8a28; }
.sw { --s: #eee; }
.ora { color: #ee8a28; }
.blkc { color: #191919; }

.work { flex: 1; display: flex; min-height: 0; }
.tools { width: 39px; flex: none; padding-left: 1px; }
.vgrp { width: 34px; display: grid; gap: 1px; background: #474747; border-radius: 3px; overflow: hidden; margin-bottom: 3px; }
.vgrp.a { margin-top: 12px; }
.vgrp button { height: 35px; width: 34px; background: #5a5a5a; }
.vgrp button:only-child { height: 34px; }
.center { flex: 1; min-width: 0; display: flex; flex-direction: column; }
.viewpanel { flex: 1; min-height: 0; display: flex; flex-direction: column; margin-right: 1px; }
.phead { height: 22px; flex: none; align-items: center; padding: 0 7px 2px 6px; }
.phead .bg { margin-right: -4px; }
.bg { color: #969696; margin-top: 2px; }
.bg.lit { color: #eee; }
.vicons { margin-left: auto; display: flex; gap: 6px; padding-top: 3px; margin-right: -5px; }
.viewport { flex: 1; min-height: 0; position: relative; border: 1px solid #868686; overflow: hidden; }
.scene { width: 100%; height: 100%; }
.tag { position: absolute; background: rgba(50, 50, 50, .5); color: #eee; line-height: 16px; padding: 0 2px; border-radius: 2px; }
.tl { left: 2px; top: 3px; }
.tc { left: 50%; top: 3px; transform: translateX(-40px); display: flex; }
.br { right: 3px; bottom: 4px; }
.gizmo { position: absolute; left: 24px; bottom: 22px; font: 11px "Open Sans", sans-serif; }

.timeline { flex: none; height: 32px; display: flex; padding: 6px 1px 0 0; }
.timeline .grip, .transport .grip { height: 18px; margin-left: 1px; }
.ruler { flex: 1; position: relative; margin: -2px 12px 0 9px; }
.ruler .head { position: absolute; left: -5px; top: 0; width: 10px; height: 16px; background: #84a2d0; }
.ruler ol { position: absolute; inset: -2px 0 auto 0; display: flex; justify-content: space-between; list-style: none; }
.ruler li { width: 0; display: flex; justify-content: center; }
.ruler li:first-child { color: #84a2d0; justify-content: flex-start; text-indent: 5px; }
.ruler svg { overflow: visible; }
.transport { flex: none; height: 29px; display: flex; align-items: center; padding: 0 2px 4px 0; }
.transport .num { margin-left: 2px; }
.range { flex: 1; height: 18px; background: #5a5a5a; border-radius: 3px; margin: 0 4px 0 6px; display: flex; align-items: center; padding: 0 5px; gap: 6px; color: #d8d8d8; }
.range i { width: 4px; height: 10px; border: 1px solid #888; border-width: 0 1px; }
.range .end { margin-left: auto; margin-right: 2px; }
.pg { display: flex; gap: 1px; background: #474747; border-radius: 3px; overflow: hidden; flex: none; }
.pg.p1 { margin-left: 11px; }
.pg.one + .p1 { margin-left: 12px; }
.pg.p4 { margin-left: 4px; }
.pg button { width: 27px; height: 26px; background: #5a5a5a; display: grid; place-items: center; }
.pg.one button { width: 26px; }
.pg svg { width: 26px; height: 26px; }

.bottom { flex: none; height: 133px; display: flex; gap: 3px; margin-right: 1px; }
.mats { flex: 1; }
.mats .phead { height: 23px; border-bottom: 1px solid #4f4f4f; }
.coords { width: 332px; }
.chead { height: 24px; display: grid; grid-template-columns: 23px 102px 102px 1fr; align-items: center; margin: 0 1px; padding-left: 4px; border-bottom: 1px solid #4f4f4f; color: #999; }
.cgrid { display: grid; grid-template-columns: 9px 95px 9px 95px 9px 1fr; gap: 4px 3px; padding: 6px 4px 0 3px; }
.cgrid .num { width: 100%; }
.cgrid label { line-height: 18px; }
.cgrid .sel, .cgrid .btn { margin-top: 2px; margin-right: 1px; }
.status { flex: none; height: 24px; margin: 2px 1px 1px 0; display: flex; align-items: center; padding-left: 4px; }
.status .bg { margin: 0; }

.right { position: relative; margin-left: 2px; display: flex; flex-direction: column; gap: 4px; min-width: 0; min-height: 0; }
.right .panel { border-bottom: 0; }
.browser { flex: 450 1 0; min-height: 0; display: flex; flex-direction: column; }
.browser > .phead, .attrs > .phead { height: 23px; border-bottom: 1px solid #4f4f4f; }
.bicons, .aicons { margin-left: auto; display: flex; align-items: center; gap: 2px; color: #9a9a9a; margin-right: -5px; }
.aicons { gap: 5px; }
.bicons .vr { width: 1px; height: 20px; background: #555; margin: 0 -2px; }
.bicons svg:nth-of-type(n+6):not(:last-child) { margin-right: 3px; }
.dim { color: #5c5c5c; }
.flip { transform: scaleX(-1); }
.flipy { transform: scaleY(-1); }
.up { transform: rotate(90deg); }
.bbody { flex: 1; min-height: 0; display: grid; grid-template-columns: minmax(0, 361fr) minmax(0, 538fr); gap: 2px; padding: 1px 0 2px; }
.bleft { display: flex; flex-direction: column; min-height: 0; }
.treewrap { flex: 232 1 232px; min-height: 0; display: flex; }
.tree { flex: 1; border: 1px solid #4f4f4f; overflow: hidden; list-style: none; padding-left: 4px; }
.tree li { height: 24px; display: flex; align-items: center; color: #c8c8c8; }
.tree .s { padding-left: 8px; border-left: 1px solid #8a8a8a; margin-left: 8px; }
.tree li span { margin: -2px 0 0 3px; padding: 1px 3px; border: 1px solid transparent; }
.tree .s .ic { margin: 1px 0 0 -1px; }
.tree .s span { margin-top: -3px; margin-left: 5px; }
.tree li .cur { background: #41536f; border-color: #5b7aa8; margin-left: 2px; }
.scroll { width: 15px; display: flex; flex-direction: column; align-items: center; padding: 4px 2px 3px 0; color: #9a9a9a; }
.scroll i { width: 4px; flex: 0 0 131px; margin: 3px 0 auto; border-radius: 2px; background: #5e5e5e; }
.ptabs { height: 23px; flex: none; background: #333; display: flex; align-items: stretch; margin-top: 3px; padding-top: 2px; color: #858585; }
.ptabs button { width: 34px; padding-bottom: 4px; }
.ptabs .act { background: #3d3d3d; border: 1px solid #4f4f4f; border-bottom: 0; border-radius: 4px 4px 0 0; color: #e0e0e0; }
.preview { flex: 168 1 168px; min-height: 0; border: 1px solid #4f4f4f; border-top-color: #454545; margin-right: 1px; display: flex; flex-direction: column; align-items: center; padding: 29px 4px 3px; }
.preview p { margin-top: auto; align-self: stretch; display: flex; gap: 12px; }
.bright { border: 1px solid #4f4f4f; display: flex; flex-direction: column; min-width: 0; min-height: 0; }
.files { flex: 1; position: relative; display: grid; grid-template-columns: repeat(auto-fill, 66px); grid-auto-rows: 81px; align-content: start; padding: 15px 0 0 1px; min-height: 0; }
.files figure { display: flex; flex-direction: column; align-items: center; gap: 9px; }
.files figcaption { white-space: nowrap; margin-right: 4px; }
.mark { position: absolute; left: 61px; top: 86px; width: 147px; height: 99px; border: 2px solid #ed1c24; }
.pointer { position: absolute; left: 177px; top: 204px; }
.zoombar { height: 31px; flex: none; border-top: 1px solid #4f4f4f; display: flex; align-items: center; padding-left: 43px; }
.dot { width: 7px; height: 7px; border-radius: 50%; background: #8d8d8d; }
.big-dot { width: 13px; height: 13px; }
.zoombar input { appearance: none; width: 103px; height: 18px; margin: 0 9px 0 12px; background: linear-gradient(90deg, #666 16px, #333 16px); border: 1px solid #4c4c4c; border-radius: 4px; }
.zoombar input::-webkit-slider-thumb { appearance: none; width: 3px; height: 16px; background: #84a2d0; }

.attrs { flex: 536 1 0; min-height: 0; overflow: hidden; }
.obj { display: flex; align-items: center; gap: 4px; height: 26px; padding-left: 6px; margin-top: 1px; }
.obj span { padding-bottom: 2px; }
.atabs { display: flex; gap: 1px; padding-left: 3px; }
.atabs button { width: 51px; height: 18px; background: #5a5a5a; line-height: 18px; }
.atabs .act { background: #84a2d0; color: #111; }
.attrs h2 { font-size: 11px; line-height: 16px; color: #eee; padding: 7px 0 6px 4px; }
.sec { border-bottom: 1px solid #4d4d4d; padding: 6px 0 4px; display: grid; gap: 4px; margin-left: 2px; }
.sec.first { padding: 0 0 3px; gap: 3px; }
.sec.lod { padding-top: 5px; }
.sec.tight { padding-top: 4px; gap: 2px; }
.sec.colors { gap: 0; }
.r { height: 18px; display: grid; grid-template-columns: 24px 92px 106px 159px 76px; align-items: center; }
.checks .r { height: 16px; }
.r label { display: flex; align-items: center; }
.a { grid-column: 2; }
.b { grid-column: 4; }
.r .mr { grid-column: 1; justify-self: start; margin-left: 4px; }
.r label i { flex: 1; height: 2px; margin: 8px 10px 0 0; background: linear-gradient(90deg, transparent 5px, #8a8a8a 5px) right 0 top 0 / 7px 1px repeat-x; }
.r .b i { margin-right: 5px; }
.r label svg { margin-right: 3px; }
.r .unit { grid-column: 4; width: 54px; margin-left: -25px; }
.mid { width: 80px; }
.btn.wide { width: 185px; margin-left: 13px; }
input[type=checkbox] { appearance: none; width: 13px; height: 13px; border: 1px solid #9a9a9a; border-radius: 2px; }
input[type=checkbox]:checked { background: #b8b8b8; display: grid; place-items: center; border-color: #b8b8b8; }
input[type=checkbox]:checked::after { content: ""; width: 4px; height: 8px; border: solid #111; border-width: 0 2px 2px 0; transform: rotate(45deg) translate(-1px, -1px); }
.swatch { width: 76px; height: 17px; background: #999; border: 1px solid #5a5a5a; }
.dropper { margin-left: -23px; }
.free { display: flex; align-items: center; gap: 4px; height: 18px; padding-left: 24px; }
.presets { display: flex; gap: 14px; padding: 5px 0 0 15px; }
.presets .btn { width: 74px; }
.badge { position: absolute; right: 17px; top: 419px; width: 50px; height: 50px; border-radius: 50%; background: #fff; border: 3px solid #2a86ee; box-shadow: inset 0 0 0 1px #fff, inset 0 0 0 2px #333; display: flex; flex-direction: column; align-items: center; padding-top: 7px; color: #111; font: bold 6px/8px "Noto Sans CJK SC", sans-serif; }

.side { background: #333; display: flex; flex-direction: column; gap: 4px; }
.stabs { flex: 536 1 0; display: flex; flex-direction: column; align-items: flex-start; color: #858585; }
.stabs.top { flex: 450 1 0; }
.stabs button { writing-mode: vertical-rl; text-orientation: sideways; width: 22px; padding: 6px 0; line-height: 22px; text-align: left; }
.stabs .act { background: #3d3d3d; border: 1px solid #4f4f4f; border-left: 0; border-radius: 0 4px 4px 0; color: #e0e0e0; padding: 5px 0; }
```
FILE: scene.js
```js
// Perspective floor grid: each cell is 100 cm, seen from above along the diagonal.
const CX = 475, HORIZON = 15.6, DEPTH = 6.782, RISE = 2288, SPREAD = 507.5, EXTENT = 35, NEAR = 1;

function project(i, j, side) {
  const w = DEPTH + (i + j) / 2;
  return (CX + side * SPREAD * (i - j) / w).toFixed(1) + ' ' + (HORIZON + RISE / w).toFixed(1);
}

const paths = { minor: '', major: '', axes: '' };
for (let i = -EXTENT; i <= EXTENT; i++) {
  const start = Math.max(-EXTENT, 2 * (NEAR - DEPTH) - i);
  const kind = i === 0 ? 'axes' : i % 10 === 0 ? 'major' : 'minor';
  for (const side of [-1, 1]) {
    paths[kind] += 'M' + project(i, start, side) + 'L' + project(i, EXTENT, side);
  }
}
paths.major += paths.axes;
for (const kind in paths) document.getElementById(kind).setAttribute('d', paths[kind]);

// Timeline: one tick per frame, a label every five.
const NS = 'http://www.w3.org/2000/svg';
const ticks = document.getElementById('ticks');
function line(x1, x2, y1, y2, color) {
  const el = document.createElementNS(NS, 'line');
  Object.entries({ x1, x2, y1, y2, stroke: color }).forEach(([k, v]) => el.setAttribute(k, v));
  ticks.append(el);
}
line('-6', '100%', 16.5, 16.5, '#8f8f8f');
for (let f = 0; f <= 90; f++) {
  const x = f / 90 * 100 + '%';
  line(x, x, 19, f % 5 ? 21 : 22, '#c8c8c8');
  if (f && f % 30 === 0) line(x, x, 1, 22, '#8f8f8f');
  if (f % 5 === 0) {
    const li = document.createElement('li');
    li.textContent = f;
    document.getElementById('labels').append(li);
  }
}
```
